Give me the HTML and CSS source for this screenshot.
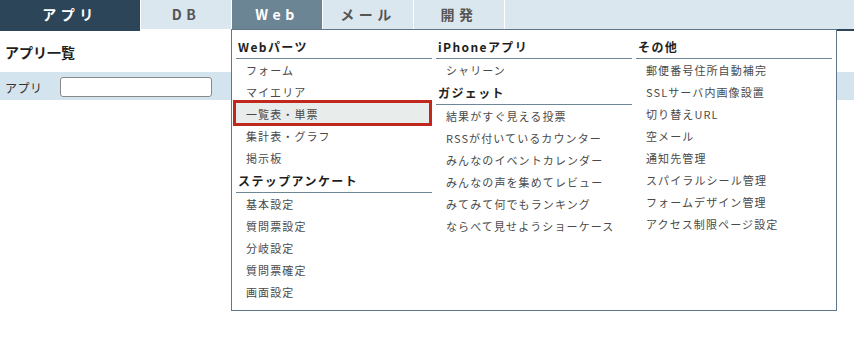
FILE: index.html
```html
<!DOCTYPE html>
<html lang="ja">
<head>
<meta charset="utf-8">
<title>アプリ一覧</title>
<link rel="stylesheet" href="styles.css">
</head>
<body>
<div class="page">
  <nav class="tabs">
    <div class="tab tab-app">アプリ</div>
    <div class="tab tab-light">DB</div>
    <div class="tab tab-web">Web</div>
    <div class="tab tab-light">メール</div>
    <div class="tab tab-light">開発</div>
    <div class="tab-fill"></div>
  </nav>

  <main class="main">
    <h1 class="title">アプリ一覧</h1>
    <div class="band">
      <label class="band-label" for="app">アプリ</label>
      <input class="band-input" id="app" type="text">
    </div>
  </main>

  <div class="dropdown">
    <div class="col">
      <div class="head">Webパーツ</div>
      <div class="item">フォーム</div>
      <div class="item">マイエリア</div>
      <div class="item item-hl">一覧表・単票</div>
      <div class="item">集計表・グラフ</div>
      <div class="item">掲示板</div>
      <div class="head">ステップアンケート</div>
      <div class="item">基本設定</div>
      <div class="item">質問票設定</div>
      <div class="item">分岐設定</div>
      <div class="item">質問票確定</div>
      <div class="item">画面設定</div>
    </div>
    <div class="col">
      <div class="head">iPhoneアプリ</div>
      <div class="item">シャリーン</div>
      <div class="head">ガジェット</div>
      <div class="item">結果がすぐ見える投票</div>
      <div class="item">RSSが付いているカウンター</div>
      <div class="item">みんなのイベントカレンダー</div>
      <div class="item">みんなの声を集めてレビュー</div>
      <div class="item">みてみて何でもランキング</div>
      <div class="item">ならべて見せようショーケース</div>
    </div>
    <div class="col">
      <div class="head">その他</div>
      <div class="item">郵便番号住所自動補完</div>
      <div class="item">SSLサーバ内画像設置</div>
      <div class="item">切り替えURL</div>
      <div class="item">空メール</div>
      <div class="item">通知先管理</div>
      <div class="item">スパイラルシール管理</div>
      <div class="item">フォームデザイン管理</div>
      <div class="item">アクセス制限ページ設定</div>
    </div>
  </div>
</div>
</body>
</html>
```
FILE: styles.css
```css
* { box-sizing: border-box; }

html, body {
  margin: 0;
  padding: 0;
  background: #ffffff;
}

body {
  font-family: "Noto Sans CJK JP", "Noto Sans", sans-serif;
  color: #333333;
}

.page {
  position: relative;
  width: 854px;
  height: 338px;
  overflow: hidden;
}

/* ---------- tabs ---------- */
.tabs {
  display: flex;
  height: 31px;
}

.tab {
  height: 31px;
  line-height: 29px;
  text-align: center;
  font-size: 14px;
  font-weight: bold;
  letter-spacing: 4.5px;
  border-bottom: 2px solid #ffffff;
}

.tab-app {
  width: 140px;
  background: #2d4558;
  color: #ffffff;
  border-bottom-color: #2d4558;
}

.tab-light {
  width: 91px;
  background: #dbe7ef;
  color: #555555;
  border-left: 1px solid #ffffff;
}

.tab-web {
  width: 91px;
  background: #6c8595;
  color: #ffffff;
  border-left: 1px solid #ffffff;
}

.tab-fill {
  flex: 1;
  height: 31px;
  background: #dbe7ef;
  border-left: 1px solid #ffffff;
  border-bottom: 2px solid #2d4558;
}

/* ---------- main ---------- */
.main {
  padding-top: 11px;
}

.title {
  margin: 0 0 10px;
  padding-left: 5px;
  font-size: 14px;
  line-height: 20px;
  font-weight: bold;
  color: #1e1e1e;
}

.band {
  display: flex;
  align-items: center;
  height: 28px;
  padding-left: 5px;
  padding-top: 2px;
  background: #d4e4ee;
}

.band-label {
  width: 55px;
  font-size: 12px;
  color: #333333;
  letter-spacing: 0.5px;
}

.band-input {
  width: 152px;
  height: 20px;
  margin: 0;
  padding: 0 4px;
  border: 1px solid #8a8a8a;
  border-radius: 3px;
  background: #ffffff;
}

/* ---------- dropdown ---------- */
.dropdown {
  position: absolute;
  left: 231px;
  top: 29px;
  width: 606px;
  height: 282px;
  background: #ffffff;
  border: 1px solid #5f7686;
  padding: 5px 4px 0;
  display: grid;
  grid-template-columns: 196px 196px 196px;
  column-gap: 4px;
  align-items: start;
}

.col {
  display: flex;
  flex-direction: column;
}

.head {
  height: 24px;
  line-height: 23px;
  padding-left: 2px;
  font-size: 12px;
  font-weight: bold;
  letter-spacing: 1.4px;
  color: #1e1e1e;
  border-bottom: 1px solid #6f8696;
}

.item {
  height: 22px;
  line-height: 22px;
  padding-left: 10px;
  font-size: 11px;
  letter-spacing: 1.1px;
  color: #4a4a4a;
  white-space: nowrap;
}

.item-hl {
  position: relative;
  z-index: 0;
}

.item-hl::before {
  content: "";
  position: absolute;
  top: -3px;
  bottom: -1px;
  left: -3px;
  right: 0;
  border: 3px solid #c0281d;
  background: #e8eceb;
  z-index: -1;
}
```
